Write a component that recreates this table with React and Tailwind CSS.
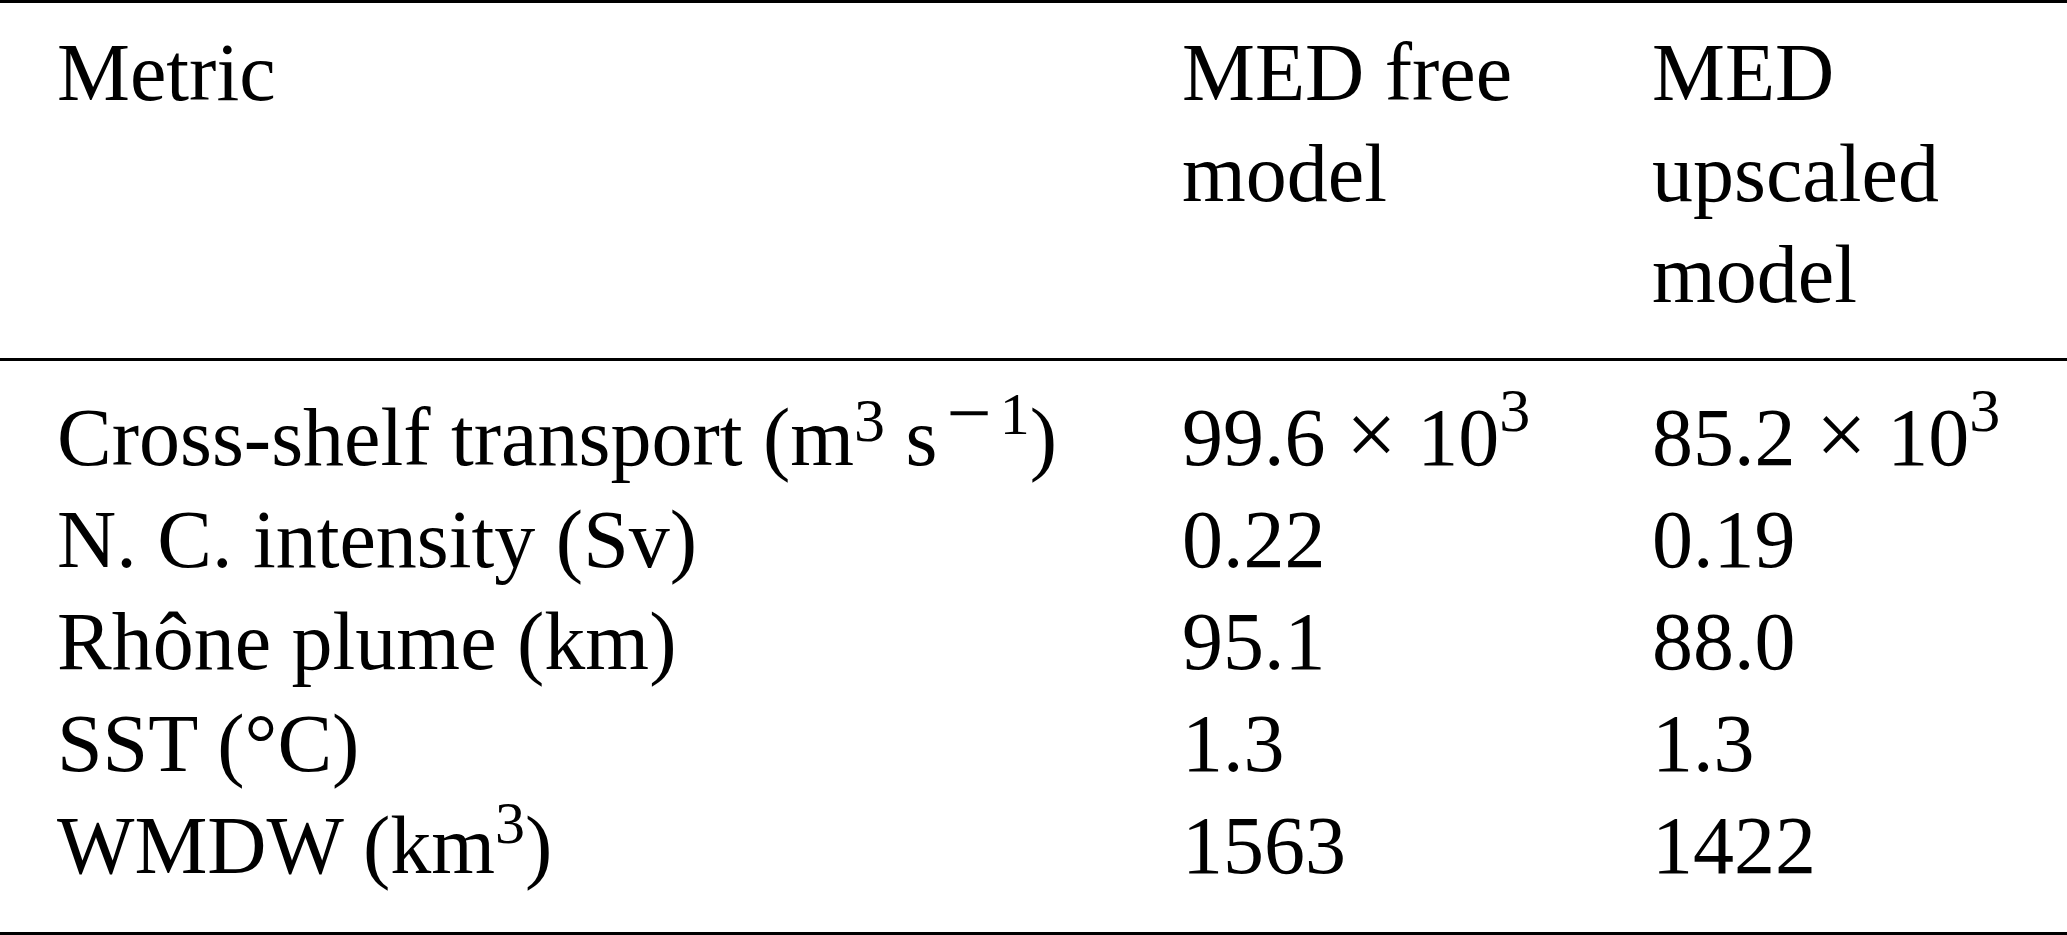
const Sup = ({ children, className = "" }) => (
  <sup className={`leading-none ${className}`}>{children}</sup>
);

const header = [
  ["Metric"],
  ["MED free", "model"],
  ["MED", "upscaled", "model"],
];

const rows = [
  {
    metric: (
      <>
        Cross-shelf transport (m<Sup className="text-[62px] -top-[24px]">3</Sup> s
        <Sup className="-top-[31px] ml-[9px]">
          <span className="relative top-[6px] text-[80px]">−</span>
          <span className="text-[60px] ml-[8px]">1</span>
        </Sup>
        )
      </>
    ),
    free: (
      <>
        99.6 <span className="text-[90px] leading-none">×</span> 10
        <Sup className="text-[62px] -top-[34px]">3</Sup>
      </>
    ),
    upscaled: (
      <>
        85.2 <span className="text-[90px] leading-none">×</span> 10
        <Sup className="text-[62px] -top-[34px]">3</Sup>
      </>
    ),
  },
  { metric: "N. C. intensity (Sv)", free: "0.22", upscaled: "0.19" },
  { metric: "Rhône plume (km)", free: "95.1", upscaled: "88.0" },
  { metric: "SST (°C)", free: "1.3", upscaled: "1.3" },
  {
    metric: (
      <>
        WMDW (km<Sup className="text-[60px] -top-[30px]">3</Sup>)
      </>
    ),
    free: "1563",
    upscaled: "1422",
  },
];

export default function App() {
  return (
    <div className="w-[2067px] h-[935px] overflow-hidden bg-white text-black font-['Liberation_Serif','Times_New_Roman',serif] text-[82px]">
      {/* header */}
      <div className="border-t-[3px] border-b-[3px] border-black pt-[19px] pb-[33px] pl-[57px] grid grid-cols-[1125px_470px_1fr] leading-[101px]">
        {header.map((lines, i) => (
          <div key={i} className="flex flex-col whitespace-nowrap">
            {lines.map((line) => (
              <span key={line}>{line}</span>
            ))}
          </div>
        ))}
      </div>

      {/* body */}
      <div className="border-b-[3px] border-black pt-[26px] pb-[35px] pl-[57px] flex flex-col leading-[102px]">
        {rows.map((row, i) => (
          <div key={i} className="grid grid-cols-[1125px_470px_1fr] whitespace-nowrap">
            <div>{row.metric}</div>
            <div>{row.free}</div>
            <div>{row.upscaled}</div>
          </div>
        ))}
      </div>
    </div>
  );
}
